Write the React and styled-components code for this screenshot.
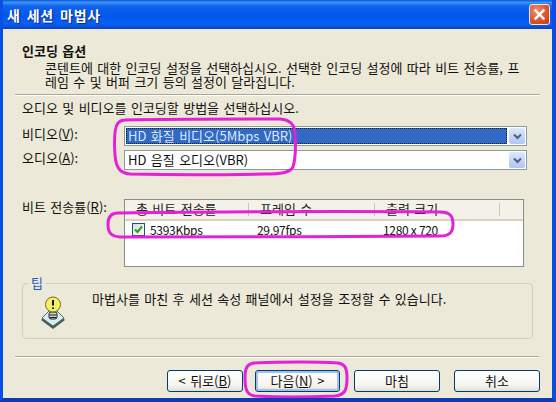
import React from "react";
import styled, { createGlobalStyle } from "styled-components";

const GlobalStyle = createGlobalStyle`
  html, body {
    margin: 0;
    padding: 0;
    background: #0a3fc4;
  }
  body {
    font-family: "Noto Sans CJK KR", "Liberation Sans", sans-serif;
    font-size: 13px;
    word-spacing: 1.5px;
    color: #111;
  }
`;

const Window = styled.div`
  position: relative;
  width: 556px;
  height: 402px;
  box-sizing: border-box;
  display: flex;
  flex-direction: column;
  overflow: hidden;
  background: #0a4ad8;
  border-left: 3px solid #0a50e0;
  border-right: 4px solid #0a50e0;
  border-bottom: 4px solid #0a3cb8;
`;

const TitleBar = styled.div`
  height: 29px;
  margin: 0 -4px 0 -3px;
  padding: 0 6px 0 7px;
  flex: none;
  display: flex;
  align-items: center;
  justify-content: space-between;
  background: linear-gradient(180deg, #0a55d8 0%, #3d93f5 8%, #0f62ec 22%, #0058ee 55%, #0a60f5 82%, #0a44c0 100%);
`;

const Title = styled.span`
  color: #fff;
  font-size: 14px;
  font-weight: 700;
  letter-spacing: 0.8px;
  word-spacing: 2px;
  text-shadow: 1px 1px 1px #0a2a80;
`;

const CloseButton = styled.div`
  width: 21px;
  height: 21px;
  box-sizing: border-box;
  border: 1px solid #f2e6e0;
  border-radius: 3px;
  background: radial-gradient(circle at 35% 30%, #ec8f70 0%, #d9562f 55%, #b93a18 100%);
  display: flex;
  align-items: center;
  justify-content: center;
`;

const Body = styled.div`
  flex: 1;
  background: #ece9d8;
  display: flex;
  flex-direction: column;
  padding: 0 12px;
`;

const Header = styled.div`
  height: 66px;
  box-sizing: border-box;
  padding: 14px 0 0 7px;
  flex: none;
  border-bottom: 1px solid #aca899;
  box-shadow: 0 1px 0 #fff;
`;

const Heading = styled.div`
  font-weight: 700;
  line-height: 16px;
`;

const Description = styled.div`
  margin: 2px 0 0 23px;
  line-height: 14px;
`;

const Content = styled.div`
  padding: 4px 7px 0;
  display: flex;
  flex-direction: column;
`;

const Instruction = styled.div`
  line-height: 17px;
  margin-bottom: 10px;
`;

const FormRow = styled.div`
  display: grid;
  grid-template-columns: 102px 403px;
  align-items: center;
  margin-bottom: ${(props) => props.$gap || 4}px;
`;

const FieldLabel = styled.span`
  padding-bottom: 4px;
  line-height: 16px;
`;

const Combo = styled.div`
  height: 20px;
  box-sizing: border-box;
  border: 1px solid #8a9aa5;
  background: #fff;
  display: flex;
  align-items: stretch;
  padding: 1px;
`;

const ComboValue = styled.div`
  flex: 1;
  padding-left: 2px;
  line-height: 15px;
  color: ${(props) => (props.$selected ? "#dce8f8" : "#111")};
  background: ${(props) => (props.$selected ? "#316ac5" : "transparent")};
  outline: ${(props) => (props.$selected ? "1px dotted #1a1a1a" : "none")};
  outline-offset: -1px;
`;

const ComboArrow = styled.div`
  width: 16px;
  margin-left: 2px;
  border-radius: 2px;
  background: linear-gradient(180deg, #dfe8fb 0%, #c3d3f7 60%, #b2c6f0 100%);
  display: flex;
  align-items: center;
  justify-content: center;
`;

const ListRow = styled.div`
  display: grid;
  grid-template-columns: 102px 400px;
  margin-top: 25px;
`;

const ListLabel = styled.div`
  line-height: 16px;
`;

const List = styled.div`
  height: 68px;
  box-sizing: border-box;
  border: 1px solid #848c8c;
  background: #fff;
`;

const ListHeader = styled.div`
  height: 21px;
  box-sizing: border-box;
  display: grid;
  grid-template-columns: 124px 126px 125px;
  border-bottom: 2px solid #d6d2c2;
  background: #f4f2e8;
`;

const HeaderCell = styled.div`
  padding-left: 11px;
  color: #222;
  border-right: 1px solid #c9c6b6;
  margin: 3px 0;
  line-height: 12px;
`;

const ListItem = styled.div`
  display: grid;
  grid-template-columns: 132px 126px 125px;
  height: 16px;
  align-items: center;
  font-size: 12px;
  word-spacing: 0;
`;

const FirstCell = styled.div`
  display: flex;
  align-items: center;
  gap: 5px;
  padding-left: 7px;
  letter-spacing: -0.3px;
`;

const Cell = styled.div`
  letter-spacing: -0.3px;
`;

const CheckBox = styled.div`
  width: 13px;
  height: 13px;
  flex: none;
  box-sizing: border-box;
  border: 1px solid #1c5180;
  background: linear-gradient(135deg, #dcdcd7, #fff);
  display: flex;
  align-items: center;
  justify-content: center;
`;

const TipGroup = styled.fieldset`
  margin: 9px 0 0;
  padding: 0;
  width: 511px;
  height: 63px;
  box-sizing: border-box;
  border: 1px solid #d0d0bf;
  border-radius: 4px;
  display: flex;
`;

const TipLegend = styled.legend`
  margin-left: 5px;
  padding: 0 3px;
  color: #1d5bbf;
  line-height: 14px;
`;

const TipInner = styled.div`
  display: flex;
  align-items: flex-start;
  padding: 6px 0 0 17px;
  height: 40px;
`;

const TipText = styled.div`
  margin: -6px 0 0 26px;
  line-height: 18px;
`;

const FooterRule = styled.div`
  height: 1px;
  flex: none;
  margin-top: 17px;
  width: 524px;
  background: #aca899;
  box-shadow: 0 1px 0 #fff;
`;

const Footer = styled.div`
  display: flex;
  width: 525px;
  justify-content: flex-end;
  margin-top: 13px;
`;

const Button = styled.button`
  width: ${(props) => props.$width}px;
  height: 22px;
  margin-left: ${(props) => props.$left}px;
  box-sizing: border-box;
  padding: 0;
  font: inherit;
  word-spacing: inherit;
  color: #111;
  line-height: 18px;
  border: 1px solid #003c74;
  border-radius: 3px;
  background: linear-gradient(180deg, #fff 0%, #f6f5ef 70%, #e3e0d2 100%);
  box-shadow: ${(props) => (props.$active ? "inset 0 0 0 2px #a6c0ea" : "none")};
`;

const Marks = styled.svg`
  position: absolute;
  left: -3px;
  top: 0;
  pointer-events: none;
`;

const CloseIcon = () => (
  <svg width="13" height="13" viewBox="0 0 13 13">
    <path d="M2.5 2.5 L10.5 10.5 M10.5 2.5 L2.5 10.5" stroke="#fff" strokeWidth="2.4" strokeLinecap="square" />
  </svg>
);

const ArrowIcon = () => (
  <svg width="9" height="7" viewBox="0 0 9 7">
    <path d="M1 1.5 L4.5 5 L8 1.5" fill="none" stroke="#4d6185" strokeWidth="2" />
  </svg>
);

const CheckIcon = () => (
  <svg width="11" height="11" viewBox="0 0 11 11">
    <path d="M2 5.5 L4.5 8 L9 2.5" fill="none" stroke="#21a121" strokeWidth="2" />
  </svg>
);

const TipIcon = () => (
  <svg width="26" height="34" viewBox="0 0 26 34">
    <path d="M13 12 L25 24 L13 33 L1 24 Z" fill="#4a5a5a" />
    <path d="M13 11 L24 22 L13 30 L2 22 Z" fill="#d5f0ee" stroke="#59696b" strokeWidth="1" />
    <rect x="9" y="16" width="8" height="7" rx="2" fill="#cfd3c8" stroke="#222" strokeWidth="1" />
    <path d="M9.5 19 H16.5 M10 21.5 H16" stroke="#222" strokeWidth="1" />
    <circle cx="13" cy="8.5" r="7.5" fill="#f5f060" stroke="#6f6a30" strokeWidth="1" />
    <path d="M13 4 V9.5 M13 11.5 V13" stroke="#111" strokeWidth="2" />
  </svg>
);

const App = () => (
  <>
    <GlobalStyle />
    <Window>
      <TitleBar>
        <Title>새 세션 마법사</Title>
        <CloseButton>
          <CloseIcon />
        </CloseButton>
      </TitleBar>
      <Body>
        <Header>
          <Heading>인코딩 옵션</Heading>
          <Description>
            콘텐트에 대한 인코딩 설정을 선택하십시오. 선택한 인코딩 설정에 따라 비트 전송률, 프
            <br />
            레임 수 및 버퍼 크기 등의 설정이 달라집니다.
          </Description>
        </Header>
        <Content>
          <Instruction>오디오 및 비디오를 인코딩할 방법을 선택하십시오.</Instruction>
          <FormRow>
            <FieldLabel>
              비디오(<u>V</u>):
            </FieldLabel>
            <Combo>
              <ComboValue $selected>HD 화질 비디오(5Mbps VBR)</ComboValue>
              <ComboArrow>
                <ArrowIcon />
              </ComboArrow>
            </Combo>
          </FormRow>
          <FormRow $gap={0}>
            <FieldLabel>
              오디오(<u>A</u>):
            </FieldLabel>
            <Combo>
              <ComboValue>HD 음질 오디오(VBR)</ComboValue>
              <ComboArrow>
                <ArrowIcon />
              </ComboArrow>
            </Combo>
          </FormRow>
          <ListRow>
            <ListLabel>
              비트 전송률(<u>R</u>):
            </ListLabel>
            <List>
              <ListHeader>
                <HeaderCell>총 비트 전송률</HeaderCell>
                <HeaderCell>프레임 수</HeaderCell>
                <HeaderCell>출력 크기</HeaderCell>
              </ListHeader>
              <ListItem>
                <FirstCell>
                  <CheckBox>
                    <CheckIcon />
                  </CheckBox>
                  5393Kbps
                </FirstCell>
                <Cell>29,97fps</Cell>
                <Cell>1280 x 720</Cell>
              </ListItem>
            </List>
          </ListRow>
          <TipGroup>
            <TipLegend>팁</TipLegend>
            <TipInner>
              <TipIcon />
              <TipText>마법사를 마친 후 세션 속성 패널에서 설정을 조정할 수 있습니다.</TipText>
            </TipInner>
          </TipGroup>
        </Content>
        <FooterRule />
        <Footer>
          <Button $width={76}>
            &lt; 뒤로(<u>B</u>)
          </Button>
          <Button $width={85} $left={12} $active>
            다음(<u>N</u>) &gt;
          </Button>
          <Button $width={86} $left={14}>
            마침
          </Button>
          <Button $width={86} $left={14}>
            취소
          </Button>
        </Footer>
      </Body>
      <Marks width="556" height="402" viewBox="0 0 556 402">
        <g fill="none" stroke="#e520d6" strokeWidth="3" strokeLinecap="round">
          <path d="M125 120 C170 119 240 119 280 119 C290 120 295 124 295 135 C296 148 295 160 293 167 C290 173 280 174 265 174 C220 175 170 175 130 174 C120 173 116 168 115 155 C114 140 114 128 118 123 C120 121 122 120 125 120 Z" />
          <path d="M118 213 C200 212 340 211 440 212 C450 212 453 216 453 224 C453 232 450 236 440 236 C340 237 200 237 120 237 C110 236 108 232 108 224 C108 217 111 213 118 213 Z" />
          <path d="M254 363 C280 362 320 362 338 363 C345 364 347 368 347 378 C347 390 345 395 335 396 C310 397 275 397 255 396 C247 395 245 390 245 378 C245 368 247 364 254 363 Z" />
        </g>
      </Marks>
    </Window>
  </>
);

export default App;
